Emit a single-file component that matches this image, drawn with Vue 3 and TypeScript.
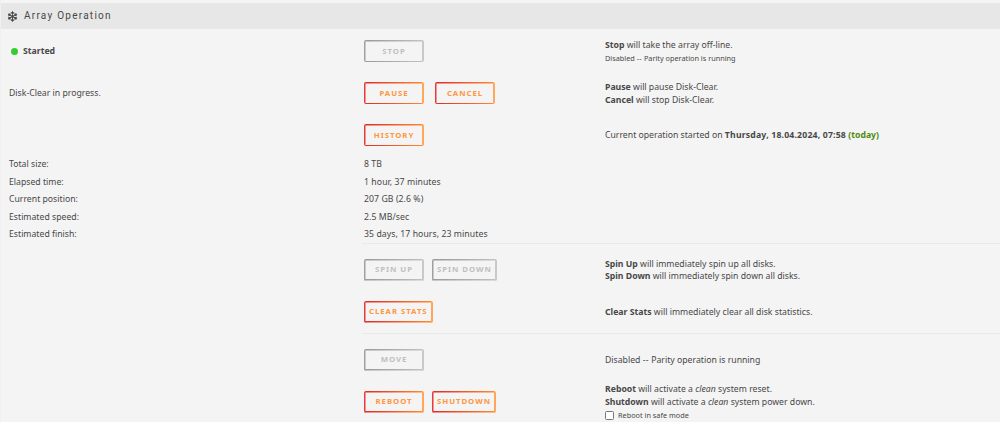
<script setup lang="ts">
interface Progress {
  label: string
  value: string
}

const progress: Progress[] = [
  { label: 'Total size:', value: '8 TB' },
  { label: 'Elapsed time:', value: '1 hour, 37 minutes' },
  { label: 'Current position:', value: '207 GB (2.6 %)' },
  { label: 'Estimated speed:', value: '2.5 MB/sec' },
  { label: 'Estimated finish:', value: '35 days, 17 hours, 23 minutes' },
]
</script>

<template>
  <main class="array">
    <header class="title">
      <svg class="title__icon" viewBox="0 0 24 24" fill="none" stroke="currentColor" stroke-width="2.3">
        <g v-for="angle in [0, 60, 120, 180, 240, 300]" :key="angle" :transform="`rotate(${angle} 12 12)`">
          <path d="M12 12 V0.8 M8.6 3.2 L12 6.2 L15.4 3.2" />
        </g>
      </svg>
      <span>Array Operation</span>
    </header>

    <section class="group">
      <div class="row">
        <div class="state"><i class="orb"></i><b>Started</b></div>
        <div class="actions"><button class="btn" disabled>Stop</button></div>
        <div class="info">
          <b>Stop</b> will take the array off-line.<br />
          <small>Disabled <span class="dash">--</span> Parity operation is running</small>
        </div>
      </div>
      <div class="row">
        <div>Disk-Clear in progress.</div>
        <div class="actions actions--wide">
          <button class="btn">Pause</button>
          <button class="btn">Cancel</button>
        </div>
        <div class="info">
          <b>Pause</b> will pause Disk-Clear.<br />
          <b>Cancel</b> will stop Disk-Clear.
        </div>
      </div>
      <div class="row">
        <div></div>
        <div class="actions"><button class="btn">History</button></div>
        <div>
          Current operation started on <b class="date">Thursday, 18.04.2024, 07:58</b> <b class="today">(today)</b>
        </div>
      </div>
    </section>

    <section class="progress">
      <div v-for="item in progress" :key="item.label" class="row row--short">
        <div>{{ item.label }}</div>
        <div class="value">{{ item.value }}</div>
      </div>
    </section>

    <hr class="line" />

    <section class="group group--spaced">
      <div class="row">
        <div></div>
        <div class="actions">
          <button class="btn" disabled>Spin Up</button>
          <button class="btn" disabled>Spin Down</button>
        </div>
        <div class="info">
          <b>Spin Up</b> will immediately spin up all disks.<br />
          <b>Spin Down</b> will immediately spin down all disks.
        </div>
      </div>
      <div class="row">
        <div></div>
        <div class="actions"><button class="btn">Clear Stats</button></div>
        <div><b>Clear Stats</b> will immediately clear all disk statistics.</div>
      </div>
    </section>

    <hr class="line" />

    <section class="group group--spaced">
      <div class="row">
        <div></div>
        <div class="actions"><button class="btn" disabled>Move</button></div>
        <div>Disabled <span class="dash">--</span> Parity operation is running</div>
      </div>
      <div class="row">
        <div></div>
        <div class="actions">
          <button class="btn">Reboot</button>
          <button class="btn">Shutdown</button>
        </div>
        <div class="info">
          <b>Reboot</b> will activate a <em>clean</em> system reset.<br />
          <b>Shutdown</b> will activate a <em>clean</em> system power down.<br />
          <label class="safe"><input type="checkbox" class="safe__box" />Reboot in safe mode</label>
        </div>
      </div>
    </section>
  </main>
</template>

<style>
body {
  background: #f4f4f4;
}
</style>

<style scoped>
.array {
  box-sizing: border-box;
  height: 422px;
  overflow: hidden;
  padding-top: 3px;
  border-left: 1px solid #f0f0f0;
  background: #f4f4f4;
  color: #484848;
  font-family: "Noto Sans", sans-serif;
  font-size: 8.7px;
  line-height: 12.6px;
}

.title {
  display: flex;
  align-items: center;
  gap: 6px;
  height: 26px;
  padding-left: 6px;
  margin-bottom: 1px;
  box-sizing: border-box;
  background: #e7e7e7;
  font-family: Roboto, "Noto Sans", sans-serif;
  font-size: 10px;
  letter-spacing: 1.25px;
}

.title__icon {
  width: 11px;
  height: 11px;
}

.row {
  display: grid;
  grid-template-columns: 355px 241px 1fr;
  align-items: center;
  height: 42px;
  padding-left: 8px;
}

.row--short {
  height: 17.4px;
}

.group--spaced {
  padding-top: 5px;
}

.line {
  height: 1px;
  margin: 0 0 0 361px;
  border: 0;
  background: #e9e9e9;
}

.state {
  display: flex;
  align-items: center;
  gap: 5px;
  padding-left: 2px;
}

.orb {
  width: 7px;
  height: 7px;
  border-radius: 50%;
  background: #33cc33;
}

.value {
  letter-spacing: 0.07px;
}

.info {
  padding-top: 1px;
  line-height: 12.8px;
}

.actions {
  display: flex;
  gap: 8px;
}

.actions--wide {
  gap: 11px;
}

.btn {
  box-sizing: border-box;
  min-width: 60px;
  height: 22px;
  padding: 0 5px 1px 5px;
  border: 0;
  border-radius: 2px;
  background:
    linear-gradient(#e83a3a, #e83a3a) 0 0 / 1.5px 100% no-repeat,
    linear-gradient(#ffa55c, #ffa55c) 100% 0 / 2px 100% no-repeat,
    linear-gradient(90deg, #e22828, #ff8c2f) 0 0 / 100% 1.5px no-repeat,
    linear-gradient(90deg, #e22828, #ff8c2f) 0 100% / 100% 1.5px no-repeat;
  color: #ff9640;
  font: bold 7.8px/20px "Noto Sans", sans-serif;
  letter-spacing: 0.95px;
  text-transform: uppercase;
  white-space: nowrap;
}

.btn:disabled {
  background:
    linear-gradient(#a0a0a0, #a0a0a0) 0 0 / 1.5px 100% no-repeat,
    linear-gradient(#c8c8c8, #c8c8c8) 100% 0 / 2px 100% no-repeat,
    linear-gradient(90deg, #999, #c2c2c2) 0 0 / 100% 1.5px no-repeat,
    linear-gradient(90deg, #999, #c2c2c2) 0 100% / 100% 1.5px no-repeat;
  color: #c0c0c0;
}

small,
.safe {
  font-size: 7.3px;
}

.dash {
  letter-spacing: 0.3px;
}

.date {
  letter-spacing: 0.18px;
}

.today {
  color: #4f8a10;
}

.safe {
  display: flex;
  align-items: center;
  gap: 4px;
}

.safe__box {
  appearance: none;
  box-sizing: border-box;
  width: 9px;
  height: 9px;
  margin: 0;
  border: 1px solid #767676;
  border-radius: 1.5px;
  background: #fff;
}
</style>
